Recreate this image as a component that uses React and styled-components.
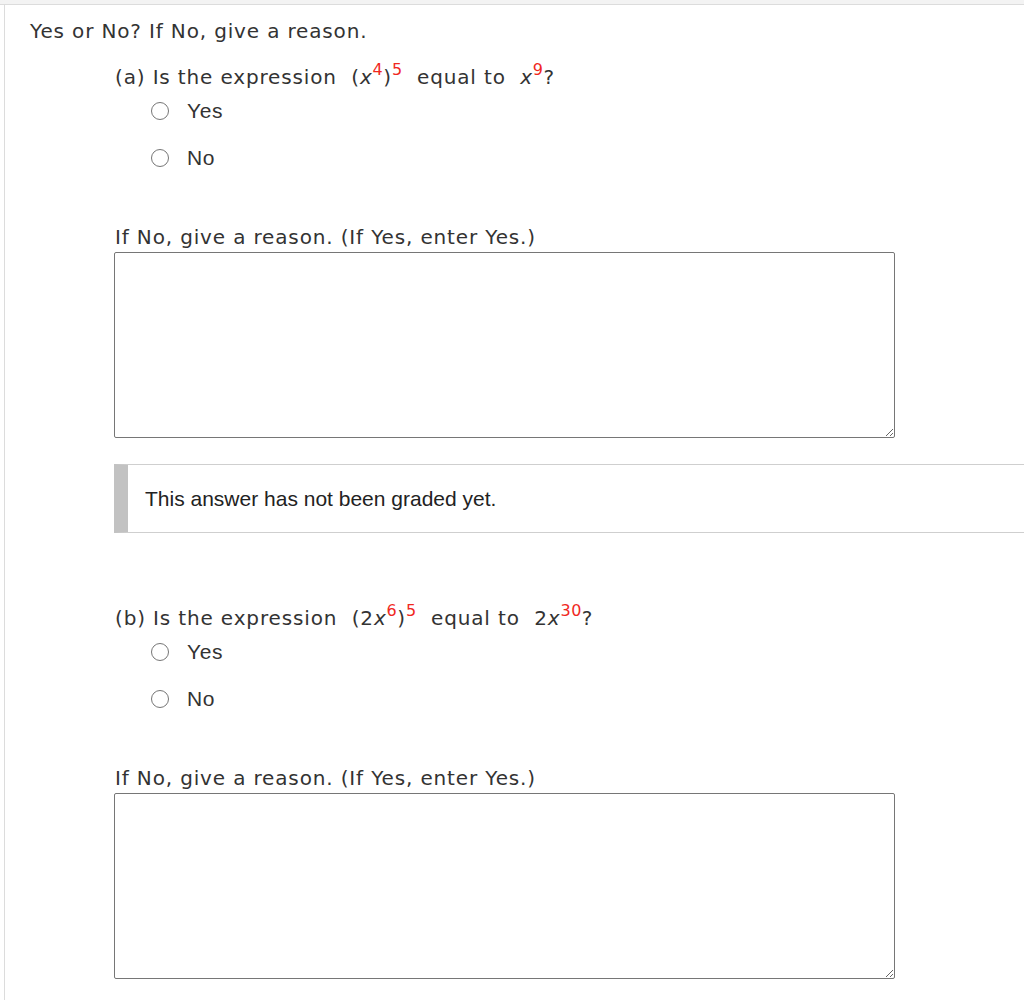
import styled, { createGlobalStyle } from "styled-components";

const Global = createGlobalStyle`
  html, body {
    margin: 0;
    padding: 0;
    background: #fff;
    overflow-x: hidden;
  }
`;

const TopBar = styled.div`
  height: 4px;
  background: #f3f3f3;
  border-bottom: 1px solid #dcdcdc;
`;

const Panel = styled.div`
  margin-left: 4px;
  border-left: 1px solid #dcdcdc;
  padding: 14px 0 22px 25px;
  color: #333;
  font-family: "DejaVu Sans", Verdana, sans-serif;
`;

const Heading = styled.div`
  font-size: 20px;
  letter-spacing: 0.85px;
  line-height: 24px;
`;

const Part = styled.div`
  margin-left: 85px;
  margin-top: ${(p) => p.$top}px;
`;

const Question = styled.div`
  font-size: 20px;
  letter-spacing: 0.85px;
  line-height: 24px;
`;

const Var = styled.i`
  font-style: italic;
`;

const Sup = styled.sup`
  color: #f0281e;
  font-size: 16px;
  letter-spacing: 0.5px;
  vertical-align: 9px;
  line-height: 0;
`;

const Options = styled.div`
  display: flex;
  flex-direction: column;
  gap: 24px;
  margin-top: 10px;
  margin-left: 36px;
`;

const Option = styled.label`
  display: flex;
  align-items: center;
  gap: 18px;
  font-family: "Liberation Sans", Arial, sans-serif;
  font-size: 21px;
  letter-spacing: 0.6px;
  line-height: 23px;
  color: #333;
`;

const Radio = styled.input.attrs({ type: "radio" })`
  appearance: none;
  margin: 0;
  width: 18px;
  height: 18px;
  border: 1px solid #767676;
  border-radius: 50%;
  background: #fff;
`;

const Prompt = styled.div`
  margin-top: 56px;
  font-size: 20px;
  letter-spacing: 0.85px;
  line-height: 24px;
`;

const Answer = styled.textarea`
  display: block;
  box-sizing: border-box;
  margin: 3px 0 0 -1px;
  width: 781px;
  height: 186px;
  border: 1px solid #767676;
  border-radius: 2px;
  resize: both;
  font-family: "Liberation Sans", Arial, sans-serif;
`;

const Notice = styled.div`
  margin: 26px 0 0 -1px;
  height: 69px;
  display: flex;
  align-items: center;
  box-sizing: border-box;
  border-top: 1px solid #cfcfcf;
  border-bottom: 1px solid #cfcfcf;
  border-left: 14px solid #c2c2c2;
  padding-left: 17px;
  font-family: "Liberation Sans", Helvetica, Arial, sans-serif;
  font-size: 21px;
  color: #222;
`;

function Block({ label, expr, target, top, graded }) {
  return (
    <Part $top={top}>
      <Question>
        ({label}) Is the expression&nbsp; {expr} &nbsp;equal to&nbsp; {target}?
      </Question>
      <Options>
        <Option>
          <Radio name={label} />
          Yes
        </Option>
        <Option>
          <Radio name={label} />
          No
        </Option>
      </Options>
      <Prompt>If No, give a reason. (If Yes, enter Yes.)</Prompt>
      <Answer />
      {graded && <Notice>This answer has not been graded yet.</Notice>}
    </Part>
  );
}

export default function App() {
  return (
    <>
      <Global />
      <TopBar />
      <Panel>
        <Heading>Yes or No? If No, give a reason.</Heading>
        <Block
          label="a"
          top={22}
          graded
          expr={
            <>
              (<Var>x</Var>
              <Sup>4</Sup>)<Sup>5</Sup>
            </>
          }
          target={
            <>
              <Var>x</Var>
              <Sup>9</Sup>
            </>
          }
        />
        <Block
          label="b"
          top={73}
          expr={
            <>
              (2<Var>x</Var>
              <Sup>6</Sup>)<Sup>5</Sup>
            </>
          }
          target={
            <>
              2<Var>x</Var>
              <Sup>30</Sup>
            </>
          }
        />
      </Panel>
    </>
  );
}
